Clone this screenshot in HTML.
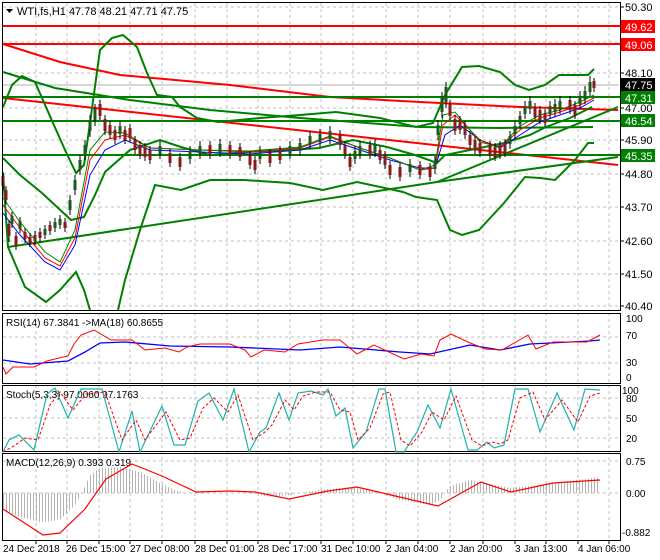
<!DOCTYPE html>
<html><head><meta charset="utf-8"><style>
html,body{margin:0;padding:0;background:#fff}
svg{display:block;font-family:"Liberation Sans",sans-serif}
</style></head><body>
<svg width="660" height="560" viewBox="0 0 660 560" xmlns="http://www.w3.org/2000/svg">
<defs>
<pattern id="hb" width="3" height="10" patternUnits="userSpaceOnUse"><rect x="0" y="0" width="1" height="10" fill="#b4b4b4"/></pattern>
</defs>
<rect width="660" height="560" fill="#fff"/>
<!-- grid -->
<g stroke="#c0c0c0" stroke-dasharray="3,3" stroke-width="1">
<path d="M36 3V310M67 3V310M99 3V310M130 3V310M162 3V310M195 3V310M227 3V310M258 3V310M290 3V310M321 3V310M353 3V310M386 3V310M418 3V310M450 3V310M483 3V310M515 3V310M546 3V310M578 3V310M609 3V310"/>
<path d="M36 313V540M67 313V540M99 313V540M130 313V540M162 313V540M195 313V540M227 313V540M258 313V540M290 313V540M321 313V540M353 313V540M386 313V540M418 313V540M450 313V540M483 313V540M515 313V540M546 313V540M578 313V540M609 313V540"/>
<path d="M3 7H619M3 42H619M3 73H619M3 108H619M3 140H619M3 174H619M3 207H619M3 241H619M3 274H619M3 306H619"/>
<path d="M3 337H619M3 363H619M3 398H619M3 418H619M3 438H619M3 461H619M3 493H619"/>
</g>
<line x1="3" y1="85" x2="619" y2="85" stroke="#b0b0b0"/>
<!-- red levels -->
<g stroke="#f00" stroke-width="2" fill="none">
<path d="M3 26H620M3 44H620"/>
<path d="M3 44L60 62 120 75 230 85 330 97 420 102 520 107 618 110"/>
<path d="M3 98L618 165"/>
</g>
<!-- green levels/trend -->
<g stroke="#008000" stroke-width="2" fill="none">
<path d="M3 97H620M3 121H620M3 155H620"/>
<path d="M8 247L437 182L618 157"/>
<path d="M437 182L618 107"/>
<path d="M3 72L55 88 130 100 210 110 300 118 420 127 500 128 593 127"/>
<path d="M3 107L12 85 22 76 35 82 53 123 65 150 76 173 84 165 90 123 100 50 112 38 123 35 137 47 147 73 157 95 172 97 180 107 197 118 218 122 260 118 300 115 336 112 380 118 416 127 433 123 445 95 462 67 479 66 500 72 515 85 529 90 545 85 559 75 588 75 594 69"/>
<path d="M3 158L20 175 42 193 71 220 84 217 95 195 105 172 130 150 160 140 181 147 210 155 248 152 290 150 319 148 353 140 387 147 415 155 437 163 445 155 470 150 504 143 530 135 546 127 570 118 592 107"/>
<path d="M3 173L8 247 25 287 46 302 60 290 76 272 84 290 90 310M118 310L125 280 140 230 155 185 181 190 210 180 244 180 290 183 323 190 357 182 385 188 403 192 416 197 437 200 450 230 462 235 479 230 504 203 525 177 540 178 555 180 575 160 588 143 594 143"/>
</g>
<!-- MAs -->
<g fill="none" stroke-width="1">
<path stroke="#00f" d="M3 213L20 235 45 262 60 270 75 245 90 175 105 150 125 140 150 150 200 152 250 154 300 150 330 140 360 150 390 160 420 168 435 168 445 135 460 125 480 140 500 148 520 135 540 122 560 115 580 108 594 100"/>
<path stroke="#f00" d="M3 205L20 228 45 258 60 266 75 238 90 160 105 140 125 135 150 148 200 150 250 152 300 148 330 137 360 148 390 158 420 170 435 168 443 125 455 115 480 140 500 147 520 130 540 118 560 112 580 105 594 98"/>
<path stroke="#080" d="M3 198L20 222 45 252 60 262 75 230 90 150 105 132 125 133 150 148 200 150 250 151 300 147 330 136 360 148 390 158 420 170 435 165 443 115 455 112 480 142 500 147 520 126 540 115 560 110 580 102 594 95"/>
</g>
<!-- candles -->
<path fill="none" stroke="#000" stroke-width="1" d="M3 172V190M6 186V204M9 220V242M12 212V228M16 232V250M20 217V233M25 228V243M30 233V247M35 231V245M40 228V242M45 225V239M50 221V235M55 218V232M60 215V229M65 218V232M70 195V215M75 175V195M80 155V175M85 140V160M90 115V137M95 104V126M100 100V120M105 115V135M110 121V139M115 126V144M120 121V139M125 126V144M130 124V142M135 136V154M140 141V159M145 143V161M150 146V164M160 141V159M170 149V167M180 153V171M190 146V164M200 141V159M210 141V159M220 139V157M230 141V159M240 143V161M250 151V169M255 156V174M260 146V164M270 149V167M280 146V164M290 141V159M300 138V156M310 131V149M320 129V147M330 126V144M340 130V150M345 141V159M350 153V171M355 146V164M360 141V159M370 141V159M375 139V157M380 146V164M385 151V169M390 161V179M400 163V181M410 159V177M420 161V179M430 163V181M435 156V174M438 120V140M442 92V118M446 82V108M450 100V120M455 115V135M460 116V134M465 121V139M470 131V149M475 136V154M480 139V157M490 141V159M495 143V161M500 141V159M505 139V157M510 131V149M515 121V139M520 111V129M525 101V119M530 96V114M535 103V121M540 106V124M545 109V127M550 101V119M555 99V117M560 96V114M570 96V114M575 101V119M580 91V109M585 86V104M590 76V96M594 78V92"/>
<path fill="none" stroke="#1e5a1e" stroke-width="3" d="M12 216V224M20 221V229M45 229V235M55 222V228M60 219V225M70 200V210M75 180V190M80 160V170M85 145V155M90 120V131M95 109V120M120 126V134M160 146V154M190 151V159M200 146V154M220 144V152M260 151V159M290 146V154M300 143V151M310 136V144M320 134V142M330 131V139M355 151V159M360 146V154M375 144V152M410 164V172M435 161V169M438 125V135M442 97V112M446 87V102M510 136V144M515 126V134M520 116V124M525 106V114M530 101V109M550 106V114M555 104V112M560 101V109M580 96V104M585 91V99M590 82V92"/>
<path fill="none" stroke="#8b1a1a" stroke-width="3" d="M3 176V186M6 190V200M9 224V236M16 236V246M25 232V239M30 237V243M35 235V241M40 232V238M50 225V231M65 222V228M100 104V116M105 119V131M110 125V135M115 130V140M125 130V140M130 128V138M135 140V150M140 145V155M145 147V157M150 150V160M170 153V163M180 157V167M210 145V155M230 145V155M240 147V157M250 155V165M255 160V170M270 153V163M280 150V160M340 135V145M345 145V155M350 157V167M370 145V155M380 150V160M385 155V165M390 165V175M400 167V177M420 165V175M430 167V177M450 104V116M455 119V131M460 120V130M465 125V135M470 135V145M475 140V150M480 143V153M490 145V155M495 147V157M500 145V155M505 143V153M535 107V117M540 110V120M545 113V123M570 100V110M575 105V115M594 81V88"/>
<!-- frames -->
<g fill="none" stroke="#000" stroke-width="1">
<rect x="2.5" y="2.5" width="618" height="308"/>
<rect x="2.5" y="313.5" width="618" height="70"/>
<rect x="2.5" y="385.5" width="618" height="66"/>
<rect x="2.5" y="453.5" width="618" height="87"/>
</g>
<g stroke="#000"><path d="M621 7h3M621 42h3M621 73h3M621 108h3M621 140h3M621 174h3M621 207h3M621 241h3M621 274h3M621 306h3M36 541v3M67 541v3M99 541v3M130 541v3M162 541v3M195 541v3M227 541v3M258 541v3M290 541v3M321 541v3M353 541v3M386 541v3M418 541v3M450 541v3M483 541v3M515 541v3M546 541v3M578 541v3M609 541v3"/></g>
<!-- header -->
<path d="M6 9h7l-3.5 4z" fill="#000"/>
<text x="17" y="15" font-size="11" fill="#000">WTI,fs,H1  47.78 48.21 47.71 47.75</text>
<!-- price axis -->
<g font-size="11" fill="#000">
<text x="625" y="11">50.30</text>
<text x="625" y="77">48.10</text>
<text x="625" y="112">47.00</text>
<text x="625" y="144">45.90</text>
<text x="625" y="178">44.80</text>
<text x="625" y="211">43.70</text>
<text x="625" y="245">42.60</text>
<text x="625" y="278">41.50</text>
<text x="625" y="310">40.40</text>
</g>
<rect x="621" y="20" width="34" height="13" fill="#f00"/><text x="625" y="31" font-size="11" fill="#fff">49.62</text>
<rect x="621" y="38" width="34" height="13" fill="#f00"/><text x="625" y="49" font-size="11" fill="#fff">49.06</text>
<rect x="621" y="78" width="34" height="13" fill="#000"/><text x="625" y="89" font-size="11" fill="#fff">47.75</text>
<rect x="621" y="91" width="34" height="13" fill="#008000"/><text x="625" y="102" font-size="11" fill="#fff">47.31</text>
<rect x="621" y="114" width="34" height="13" fill="#008000"/><text x="625" y="125" font-size="11" fill="#fff">46.54</text>
<rect x="621" y="149" width="34" height="13" fill="#008000"/><text x="625" y="160" font-size="11" fill="#fff">45.35</text>
<!-- RSI -->
<text x="6" y="326" font-size="10">RSI(14) 67.3841  -&gt;MA(18) 60.8655</text>
<path fill="none" stroke="#00f" stroke-width="1.3" d="M3 360L30 364 68 361 85 352 100 343 125 342 170 346 230 347 300 350 340 347 400 352 430 354 470 345 500 350 530 344 590 341 600 340"/>
<path fill="none" stroke="#f00" stroke-width="1" d="M3 367L6 374 13 367 34 367 47 361 55 359 68 356 74 344 81 335 94 330 111 340 132 340 145 350 165 348 179 352 187 347 200 344 230 344 245 350 251 357 264 350 285 352 298 344 323 340 340 340 357 354 374 345 404 359 421 354 434 356 440 340 451 334 468 342 485 349 502 350 528 335 536 349 553 342 587 342 600 335"/>
<g font-size="10"><text x="626" y="322">100</text><text x="626" y="339">70</text><text x="626" y="366">30</text><text x="626" y="381">0</text></g>
<!-- Stoch -->
<text x="6" y="398" font-size="10">Stoch(5,3,3) 97.0060 97.1763</text>
<path fill="none" stroke="#20b2aa" stroke-width="1.2" d="M3 452L9 440 19 435 34 450 47 394 55 388 68 418 81 389 102 389 119 452 132 411 140 452 162 406 174 445 185 445 198 401 209 393 223 420 234 389 249 452 260 432 266 428 279 393 289 420 298 393 311 391 323 395 328 389 336 416 345 408 353 448 366 432 379 389 385 389 396 452 404 452 417 432 428 405 440 428 451 389 468 450 477 450 487 442 494 448 504 445 515 389 528 389 540 432 557 393 574 430 585 389 600 390"/>
<path fill="none" stroke="#f00" stroke-width="1" stroke-dasharray="3,2" d="M3 452L14 446 25 438 38 440 50 405 60 392 73 410 86 394 105 392 122 440 136 420 145 440 166 412 180 440 190 438 203 408 214 398 228 412 238 395 253 440 265 432 272 425 285 400 294 410 303 396 316 392 330 392 340 410 350 412 358 440 370 428 383 394 390 392 401 440 410 446 422 432 432 412 444 420 456 396 472 440 482 446 492 442 500 444 508 440 520 398 533 392 545 420 562 400 578 422 590 396 600 393"/>
<g font-size="10"><text x="622" y="394">100</text><text x="626" y="402">80</text><text x="626" y="422">50</text><text x="626" y="442">20</text></g>
<!-- MACD -->
<path fill="url(#hb)" d="M3 493L3 510 20 517 40 522 60 520 75 505 82 493 90 475 100 468 120 467 140 472 160 483 175 490 185 493 250 493 270 497 290 495 300 493 320 490 350 487 370 490 380 493 400 500 430 505 440 500 445 493 450 486 470 480 490 484 510 488 530 486 560 482 600 477 600 493Z"/>
<text x="6" y="466" font-size="10">MACD(12,26,9) 0.393 0.319</text>
<path fill="none" stroke="#f00" stroke-width="1.2" d="M3 509L43 535 60 533 85 509 106 479 132 464 162 476 196 492 230 491 255 492 289 499 328 491 357 487 391 495 438 506 481 482 511 492 553 483 600 480"/>
<g font-size="10"><text x="626" y="465">0.75</text><text x="626" y="497">0.00</text><text x="622" y="536">-0.882</text></g>
<!-- time axis -->
<g font-size="10">
<text x="3" y="552">24 Dec 2018</text><text x="66" y="552">26 Dec 15:00</text><text x="130" y="552">27 Dec 08:00</text><text x="195" y="552">28 Dec 01:00</text><text x="258" y="552">28 Dec 17:00</text><text x="321" y="552">31 Dec 10:00</text><text x="386" y="552">2 Jan 04:00</text><text x="450" y="552">2 Jan 20:00</text><text x="515" y="552">3 Jan 13:00</text><text x="578" y="552">4 Jan 06:00</text>
</g>
</svg>
</body></html>
